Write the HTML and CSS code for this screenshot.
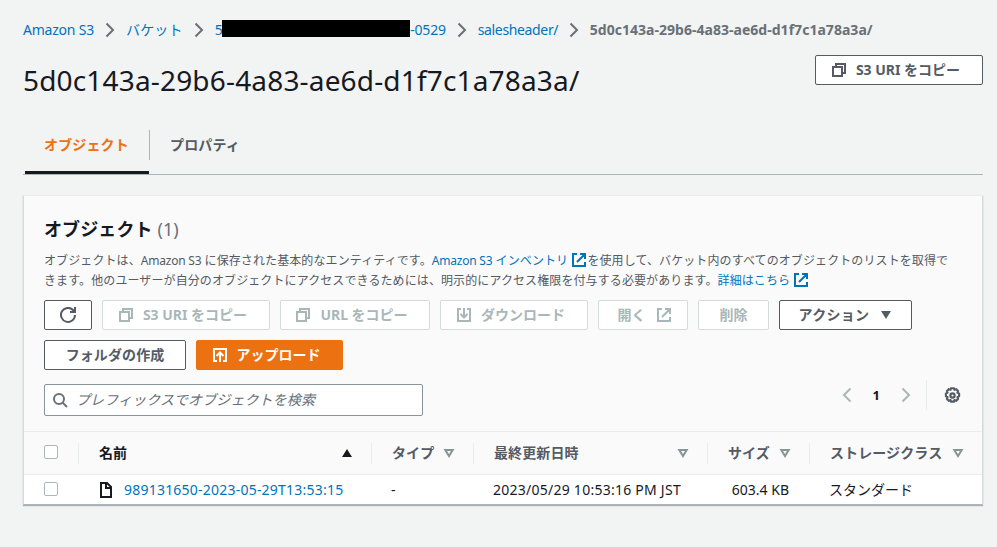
FILE: index.html
```
<!DOCTYPE html>
<html lang="ja">
<head>
<meta charset="utf-8">
<title>Amazon S3</title>
<link rel="stylesheet" href="styles.css">
</head>
<body>
<svg class="defs" width="0" height="0">
  <symbol id="chevron" viewBox="0 0 16 16"><path d="M4.500 1.500 11 8l-6.500 6.500"/></symbol>
  <symbol id="copy" viewBox="0 0 16 16"><path d="M2 5h9v9H2zM5 5V2h9v9h-3"/></symbol>
  <symbol id="external" viewBox="0 0 16 16"><path d="M6 2H2v12h12v-4M9 2h5v5M6 10l8-8"/></symbol>
  <symbol id="refresh" viewBox="0 0 16 16"><path d="M15 8a7 7 0 1 1-2-5l1.500 1.500M15 0v5h-5"/></symbol>
  <symbol id="download" viewBox="0 0 16 16"><path d="M5 2H2v12h12V2h-3M8 1v9M4.500 7 8 10.500 11.500 7"/></symbol>
  <symbol id="upload" viewBox="0 0 16 16"><path d="M5 14H2V2h12v12h-3M8 15V6M4.500 9 8 5.500 11.500 9"/></symbol>
  <symbol id="search" viewBox="0 0 16 16"><circle cx="7" cy="7" r="5"/><path d="m10.500 10.500 4.500 4.500"/></symbol>
  <symbol id="gear" viewBox="0 0 16 16"><path d="M6.700 1.200h2.600l.6 1.400 1.600-.5 1.700 1.700-.5 1.500 1.500.9v2.500l-1.500 1 .5 1.500-1.700 1.700-1.600-.5-.6 1.400H6.700l-.6-1.400-1.600.5-1.700-1.700.5-1.500-1.500-1V6.200l1.500-.9-.5-1.500 1.700-1.700 1.600.5z"/><circle cx="8" cy="8" r="2"/></symbol>
  <symbol id="file" viewBox="0 0 16 16"><path d="M3 1h6l4 4v10H3zM8 1v5h5"/></symbol>
  <symbol id="sort" viewBox="0 0 12 10"><path d="M2.300 2h7.400L6 8z"/></symbol>
</svg>

<nav class="crumbs">
  <a class="tight">Amazon S3</a>
  <svg class="icon"><use href="#chevron"/></svg>
  <a class="ja">バケット</a>
  <svg class="icon"><use href="#chevron"/></svg>
  <a class="bucket">5<span class="mask"></span><span class="tight">-0529</span></a>
  <svg class="icon"><use href="#chevron"/></svg>
  <a class="folder">salesheader/</a>
  <svg class="icon"><use href="#chevron"/></svg>
  <b>5d0c143a-29b6-4a83-ae6d-d1f7c1a78a3a/</b>
</nav>

<header class="title">
  <h1>5d0c143a-29b6-4a83-ae6d-d1f7c1a78a3a/</h1>
  <button class="btn lead w168"><svg class="icon"><use href="#copy"/></svg>S3 URI をコピー</button>
</header>

<div class="tabs">
  <div class="tab active">オブジェクト</div>
  <div class="tab next">プロパティ</div>
</div>

<section class="panel">
  <div class="top">
    <h2>オブジェクト <span>(1)</span></h2>
    <p>オブジェクトは、<span class="tight">Amazon S3</span> に保存された基本的なエンティティです。<a><span class="tight">Amazon S3</span> インベントリ <svg class="icon"><use href="#external"/></svg></a>を使用して、バケット内のすべてのオブジェクトのリストを取得で<br>きます。他のユーザーが自分のオブジェクトにアクセスできるためには、明示的にアクセス権限を付与する必要があります。<a>詳細はこちら <svg class="icon"><use href="#external"/></svg></a></p>
    <div class="actions">
      <button class="btn w48"><svg class="icon"><use href="#refresh"/></svg></button>
      <button class="btn lead off w168"><svg class="icon"><use href="#copy"/></svg>S3 URI をコピー</button>
      <button class="btn lead off w150"><svg class="icon"><use href="#copy"/></svg>URL をコピー</button>
      <button class="btn lead off w148"><svg class="icon"><use href="#download"/></svg>ダウンロード</button>
      <button class="btn trail off w90">開く<svg class="icon"><use href="#external"/></svg></button>
      <button class="btn off w71">削除</button>
      <button class="btn w133">アクション<svg class="caret" viewBox="0 0 12 10"><path d="M1 1h10L6 9z"/></svg></button>
      <button class="btn w142">フォルダの作成</button>
      <button class="btn lead primary w147"><svg class="icon"><use href="#upload"/></svg>アップロード</button>
    </div>
    <div class="tools">
      <div class="search"><svg class="icon"><use href="#search"/></svg><span>プレフィックスでオブジェクトを検索</span></div>
      <div class="pager">
        <svg class="icon prev"><use href="#chevron"/></svg>
        <b>1</b>
        <svg class="icon"><use href="#chevron"/></svg>
      </div>
      <div class="prefs"><svg class="icon"><use href="#gear"/></svg></div>
    </div>
  </div>
  <div class="row head">
    <div class="cell check"><i class="box"></i></div>
    <div class="cell sorted">名前<svg class="sort" viewBox="0 0 12 10"><path d="M1 9h10L6 1z"/></svg></div>
    <div class="cell">タイプ<svg class="sort"><use href="#sort"/></svg></div>
    <div class="cell">最終更新日時<svg class="sort"><use href="#sort"/></svg></div>
    <div class="cell">サイズ<svg class="sort"><use href="#sort"/></svg></div>
    <div class="cell">ストレージクラス<svg class="sort"><use href="#sort"/></svg></div>
  </div>
  <div class="row data">
    <div class="cell check"><i class="box"></i></div>
    <div class="cell name"><svg class="icon"><use href="#file"/></svg><a>989131650-2023-05-29T13:53:15</a></div>
    <div class="cell">-</div>
    <div class="cell date">2023/05/29 10:53:16 PM JST</div>
    <div class="cell size">603.4 KB</div>
    <div class="cell">スタンダード</div>
  </div>
</section>
</body>
</html>
```
FILE: styles.css
```
* { box-sizing: border-box; }
body {
  margin: 0;
  padding: 20px 14px 0 23px;
  height: 547px;
  overflow: hidden;
  background: #f2f3f3;
  color: #16191f;
  font: 14px/20px "Noto Sans", "Noto Sans CJK JP", sans-serif;
}
.defs { position: absolute; }
a { color: #0073bb; }
.tight { letter-spacing: -.22px; }
.ja { letter-spacing: .2px; }
.folder { letter-spacing: -.35px; }
.icon {
  width: 16px;
  height: 16px;
  flex: none;
  fill: none;
  stroke: currentColor;
  stroke-width: 2;
}

.crumbs { display: flex; align-items: center; gap: 8px; height: 20px; white-space: nowrap; }
.crumbs .icon { color: #687078; }
.crumbs b { color: #687078; letter-spacing: .03px; margin-left: -.5px; }
.bucket { display: flex; }
.mask { width: 188px; height: 17px; margin-left: -.5px; background: #000; }

.title { display: flex; justify-content: space-between; height: 79px; padding-top: 15px; }
h1 { margin: 7px 0 0; font-size: 28px; line-height: 36px; font-weight: 400; letter-spacing: .17px; }

.btn {
  display: flex;
  align-items: center;
  justify-content: center;
  gap: 8px;
  height: 30px;
  padding: 0;
  border: 1px solid #545b64;
  border-radius: 2px;
  background: #fff;
  color: #545b64;
  font: 700 14px/20px "Noto Sans", "Noto Sans CJK JP", sans-serif;
  white-space: nowrap;
}
.lead { gap: 9px; padding-right: 7px; }
.trail { gap: 10px; padding-left: 3px; }
.off { border-color: #d5dbdb; color: #aab7b8; }
.primary { border-color: #ec7211; background: #ec7211; color: #fff; }
.caret { width: 12px; height: 10px; margin-left: 3px; fill: currentColor; }
.w48 { width: 48px; }
.w71 { width: 71px; }
.w90 { width: 90px; }
.w133 { width: 133px; letter-spacing: .3px; }
.w142 { width: 142px; letter-spacing: .1px; }
.w147 { width: 147px; }
.w148 { width: 148px; }
.w150 { width: 150px; }
.w168 { width: 168px; }

.tabs { display: flex; height: 56px; border-bottom: 1px solid #aab7b8; font-weight: 700; color: #545b64; letter-spacing: .15px; }
.tab { padding: 16px 0 0 20px; }
.active { width: 124px; margin-left: 2px; border-bottom: 3px solid #16191f; color: #ec7211; padding-left: 19px; }
.next { padding-left: 21px; background: linear-gradient(#aab7b8, #aab7b8) 0 11px / 1px 30px no-repeat; }

.panel {
  height: 310px;
  margin-top: 20px;
  border: 1px solid #d5dbdb;
  border-top-color: #eaeded;
  border-bottom-color: #aab7b8;
  background: #fff;
  box-shadow: 0 1px 1px rgba(0, 28, 36, .3);
}
.top { height: 236px; padding: 21px 20px 0; background: #fafafa; border-bottom: 1px solid #eaeded; }
h2 { margin: 0; font-size: 18px; line-height: 24px; letter-spacing: .1px; }
h2 span { font-weight: 400; color: #687078; }
p { margin: 10px -20px 0 0; font-size: 12px; line-height: 20px; height: 40px; color: #545b64; white-space: nowrap; letter-spacing: .1px; }
p .icon { vertical-align: -3px; }

.actions { display: flex; flex-wrap: wrap; gap: 10px; margin: 9px 0 14px; }
.actions .w71 + .btn { margin-right: 40px; }
.tools { display: flex; align-items: center; height: 32px; }
.search {
  display: flex;
  align-items: center;
  gap: 8px;
  width: 379px;
  height: 32px;
  padding-left: 7px;
  border: 1px solid #879596;
  border-radius: 2px;
  background: #fff;
  color: #687078;
  font-style: italic;
  letter-spacing: .1px;
}
.pager { display: flex; align-items: center; gap: 18px; margin: -10px 12px 0 auto; color: #16191f; }
.pager .icon { color: #aab7b8; }
.pager b { font-size: 13px; }
.prev { transform: scaleX(-1); }
.prefs { display: flex; align-items: center; height: 30px; margin-top: -10px; padding: 0 1px 0 17px; border-left: 1px solid #eaeded; color: #545b64; }
.prefs .icon { width: 17px; height: 17px; }

.row { display: grid; grid-template-columns: 55px 293px 102px 234px 102px 1fr; align-items: center; }
.head { height: 43px; background: #fafafa; border-bottom: 1px solid #eaeded; font-weight: 700; color: #545b64; }
.cell { display: flex; align-items: center; padding: 0 18px 0 20px; white-space: nowrap; }
.head .cell { height: 21px; border-right: 1px solid #eaeded; letter-spacing: .1px; }
.head .cell:last-child { border: 0; }
.head .sorted { color: #16191f; }
.sort { width: 12px; height: 10px; margin-left: auto; fill: none; stroke: #879596; stroke-width: 2; }
.sorted .sort { fill: #16191f; stroke: none; }
.data { height: 30px; }
.data .cell { padding-left: 19px; }
.data .check { padding-left: 20px; }
.name { gap: 10px; letter-spacing: .22px; }
.date { letter-spacing: .25px; }
.data .size { justify-content: flex-end; padding-right: 21px; }
.box { width: 14px; height: 14px; margin-bottom: 2px; border: 1px solid #aab7b8; border-radius: 2px; background: #fff; }
```
